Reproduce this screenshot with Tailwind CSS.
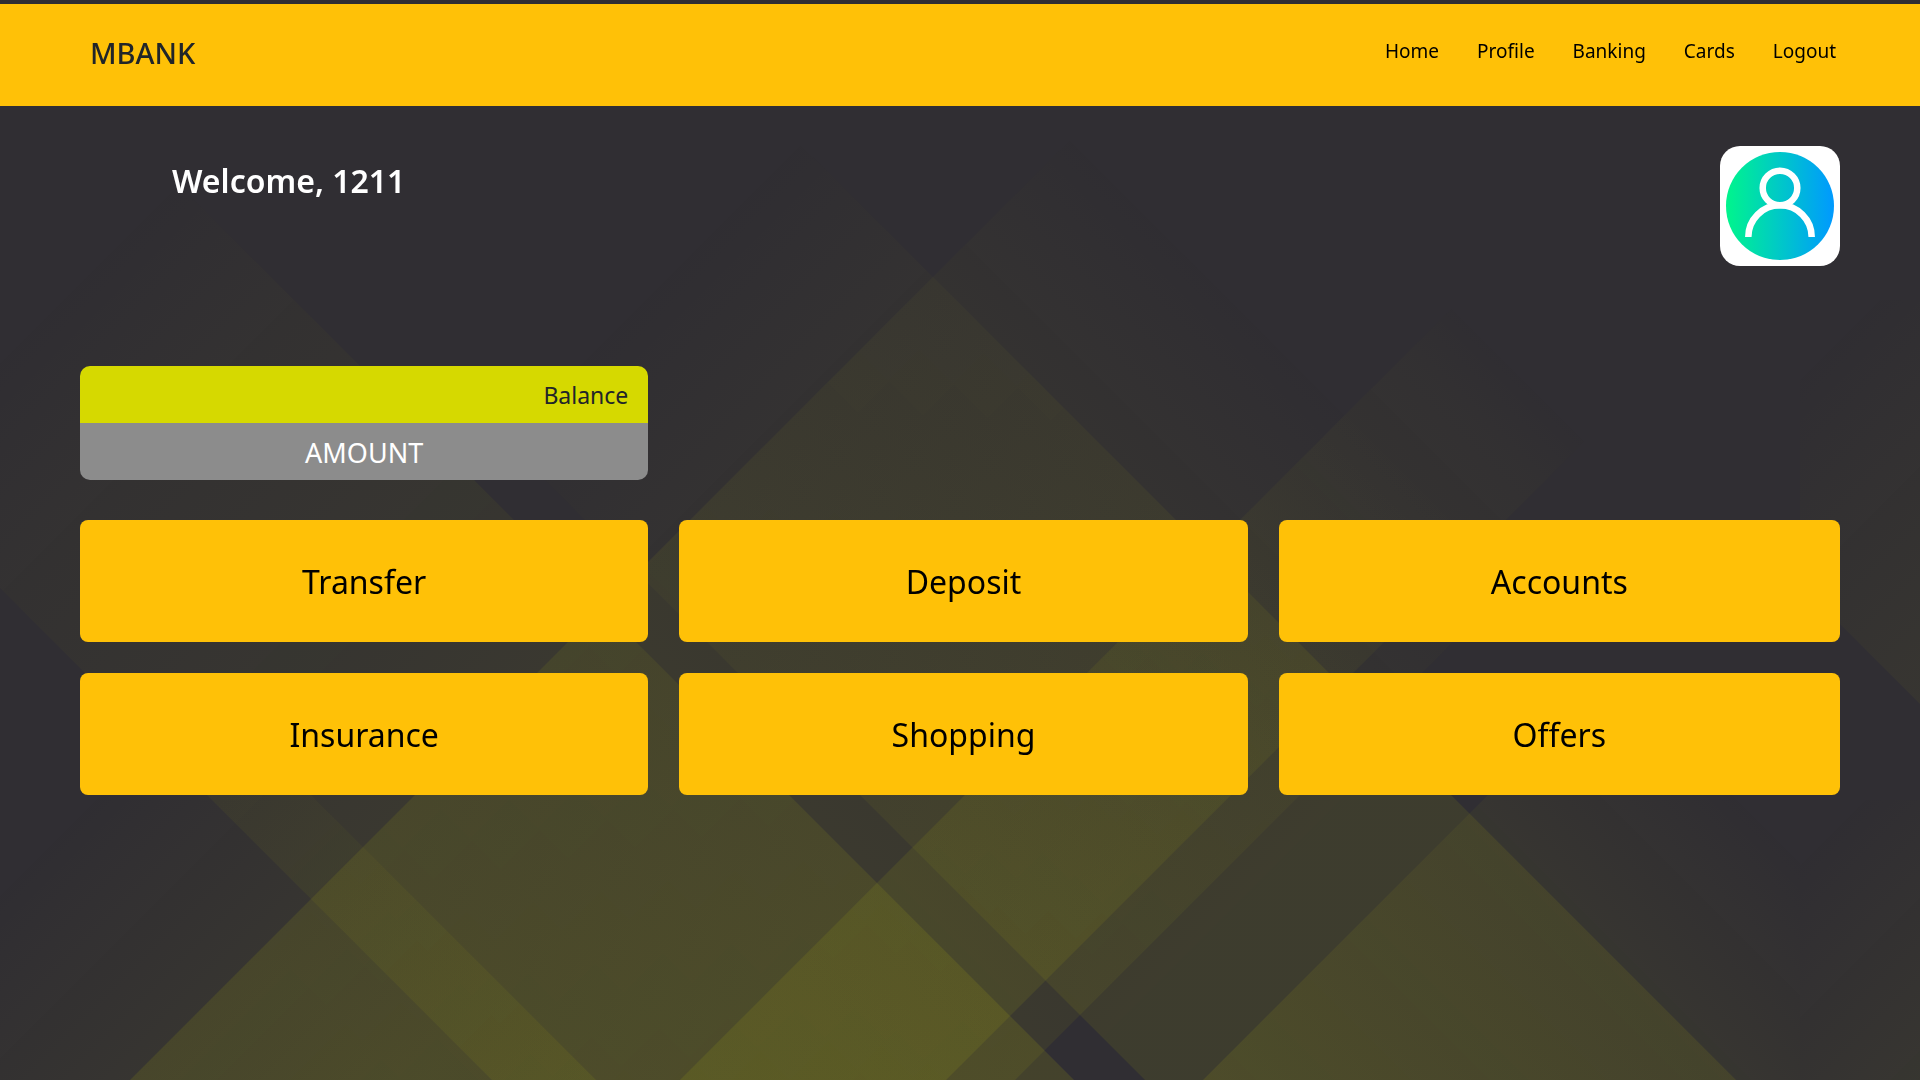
<!DOCTYPE html>
<html lang="en">
<head>
<meta charset="utf-8">
<meta name="viewport" content="width=device-width, initial-scale=1">
<title>MBANK</title>
<script src="https://cdn.jsdelivr.net/npm/@tailwindcss/browser@4"></script>
</head>
<body class="relative isolate min-h-screen overflow-x-hidden bg-[#302e33] pt-1 font-['Segoe_UI','Noto_Sans',sans-serif] text-black">

<!-- Backdrop: bands drawn in diagonal axes, u = x + y and v = x - y -->
<svg class="fixed inset-0 -z-10 h-full w-full" viewBox="0 0 1920 1080" preserveAspectRatio="xMidYMid slice" aria-hidden="true">
  <defs>
    <linearGradient id="b1" gradientUnits="userSpaceOnUse" x1="0" y1="-700" x2="0" y2="950"><stop offset="0" stop-color="#d6d900" stop-opacity=".105"/><stop offset=".42" stop-color="#d6d900" stop-opacity=".07"/><stop offset=".82" stop-color="#d6d900" stop-opacity=".028"/><stop offset="1" stop-color="#d6d900" stop-opacity="0"/></linearGradient>
    <linearGradient id="b2" gradientUnits="userSpaceOnUse" x1="340" y1="0" x2="2100" y2="0"><stop offset="0" stop-color="#d6d900" stop-opacity="0"/><stop offset=".16" stop-color="#d6d900" stop-opacity=".024"/><stop offset=".4" stop-color="#d6d900" stop-opacity=".048"/><stop offset=".7" stop-color="#d6d900" stop-opacity=".085"/><stop offset="1" stop-color="#d6d900" stop-opacity=".12"/></linearGradient>
    <linearGradient id="b3" gradientUnits="userSpaceOnUse" x1="0" y1="-200" x2="0" y2="1160"><stop offset="0" stop-color="#d6d900" stop-opacity=".095"/><stop offset=".4" stop-color="#d6d900" stop-opacity=".07"/><stop offset=".7" stop-color="#d6d900" stop-opacity=".04"/><stop offset=".92" stop-color="#d6d900" stop-opacity=".016"/><stop offset="1" stop-color="#d6d900" stop-opacity="0"/></linearGradient>
    <linearGradient id="b4" gradientUnits="userSpaceOnUse" x1="920" y1="0" x2="2150" y2="0"><stop offset="0" stop-color="#d6d900" stop-opacity="0"/><stop offset=".25" stop-color="#d6d900" stop-opacity=".024"/><stop offset=".68" stop-color="#d6d900" stop-opacity=".055"/><stop offset="1" stop-color="#d6d900" stop-opacity=".085"/></linearGradient>
    <linearGradient id="b5" gradientUnits="userSpaceOnUse" x1="0" y1="100" x2="0" y2="950"><stop offset="0" stop-color="#d6d900" stop-opacity=".105"/><stop offset=".65" stop-color="#d6d900" stop-opacity=".044"/><stop offset="1" stop-color="#d6d900" stop-opacity="0"/></linearGradient>
    <linearGradient id="b6" gradientUnits="userSpaceOnUse" x1="850" y1="0" x2="1650" y2="0"><stop offset="0" stop-color="#d6d900" stop-opacity="0"/><stop offset="1" stop-color="#d6d900" stop-opacity=".07"/></linearGradient>
    <linearGradient id="b7" gradientUnits="userSpaceOnUse" x1="880" y1="0" x2="1500" y2="0"><stop offset="0" stop-color="#d6d900" stop-opacity="0"/><stop offset="1" stop-color="#d6d900" stop-opacity=".075"/></linearGradient>
    <linearGradient id="b8" gradientUnits="userSpaceOnUse" x1="1325" y1="1325" x2="1500" y2="1500"><stop offset="0" stop-color="#d6d900" stop-opacity="0"/><stop offset="1" stop-color="#d6d900" stop-opacity=".045"/></linearGradient>
    <linearGradient id="b9" gradientUnits="userSpaceOnUse" x1="1080" y1="1080" x2="1290" y2="1290"><stop offset="0" stop-color="#d6d900" stop-opacity="0"/><stop offset="1" stop-color="#d6d900" stop-opacity=".04"/></linearGradient>
    <clipPath id="left"><path d="M0 0H1800V1080H0Z"/></clipPath>
  </defs>
  <g clip-path="url(#left)">
    <g transform="matrix(.5 .5 .5 -.5 0 0)">
      <rect x="1210" y="-1200" width="885" height="2200" fill="url(#b1)"/>
      <rect x="300" y="-588" width="2200" height="582" fill="url(#b2)"/>
      <rect x="1760" y="-1200" width="266" height="2343" fill="url(#b3)"/>
      <rect x="900" y="65" width="2200" height="591" fill="url(#b4)"/>
      <rect x="2283" y="65" width="900" height="900" fill="url(#b5)"/>
      <rect x="800" y="-588" width="1400" height="104" fill="url(#b6)"/>
      <rect x="800" y="-1200" width="1400" height="612" fill="url(#b7)"/>
    </g>
  </g>
  <path d="M1800 800H1920V1080H1800Z" fill="url(#b8)"/>
  <path d="M1800 300H1920V704L1800 584Z" fill="url(#b9)"/>
</svg>

<header class="flex h-[102px] items-center justify-between bg-[#ffc107] pr-[84px] pb-1 pl-[90px]">
  <h1 class="text-[29px] leading-9 font-medium text-[#212529]">MBANK</h1>
  <nav aria-label="Main" class="pb-1">
    <ul class="flex gap-[38px] text-[19px] leading-7">
      <li><a href="#">Home</a></li>
      <li><a href="#">Profile</a></li>
      <li><a href="#">Banking</a></li>
      <li><a href="#">Cards</a></li>
      <li><a href="#">Logout</a></li>
    </ul>
  </nav>
</header>

<main class="px-20 pt-10 pb-16">
  <section class="flex items-start justify-between pl-[92px]">
    <h2 class="pt-3 text-[32px] leading-[46px] font-semibold text-white">Welcome, 1211</h2>
    <a href="#" aria-label="Profile" class="block size-[120px] overflow-hidden rounded-[20px] bg-white">
      <svg viewBox="0 0 120 120" class="size-full" aria-hidden="true">
        <defs><linearGradient id="avatar"><stop offset="0" stop-color="#00f58c"/><stop offset=".5" stop-color="#00c8c8"/><stop offset="1" stop-color="#0099ff"/></linearGradient></defs>
        <circle cx="60" cy="60" r="54" fill="url(#avatar)"/>
        <g fill="none" stroke="#fff" stroke-width="6.5">
          <circle cx="60" cy="42" r="17.3"/>
          <path d="M28.3 91a31.7 31.7 0 0 1 63.4 0"/>
        </g>
      </svg>
    </a>
  </section>

  <div class="mt-[100px] grid grid-cols-[568fr_568fr_561fr] gap-x-[31px]">
    <section class="mb-10 overflow-hidden rounded-[10px]">
      <h3 class="bg-[#d6d900] pt-[13px] pr-5 pb-[11px] text-right text-[23px] leading-[33px] text-[#212529]">Balance</h3>
      <p class="bg-[#8c8c8c] pt-[13px] pb-[11px] text-center text-[27px] leading-[33px] text-white">AMOUNT</p>
    </section>
    <div class="col-span-3 grid grid-cols-subgrid gap-y-[31px] text-[32px] leading-[50px]">
      <button type="button" class="h-[122px] cursor-pointer rounded-lg bg-[#ffc107] pt-0.5">Transfer</button>
      <button type="button" class="h-[122px] cursor-pointer rounded-lg bg-[#ffc107] pt-0.5">Deposit</button>
      <button type="button" class="h-[122px] cursor-pointer rounded-lg bg-[#ffc107] pt-0.5">Accounts</button>
      <button type="button" class="h-[122px] cursor-pointer rounded-lg bg-[#ffc107] pt-0.5">Insurance</button>
      <button type="button" class="h-[122px] cursor-pointer rounded-lg bg-[#ffc107] pt-0.5">Shopping</button>
      <button type="button" class="h-[122px] cursor-pointer rounded-lg bg-[#ffc107] pt-0.5">Offers</button>
    </div>
  </div>
</main>
</body>
</html>
